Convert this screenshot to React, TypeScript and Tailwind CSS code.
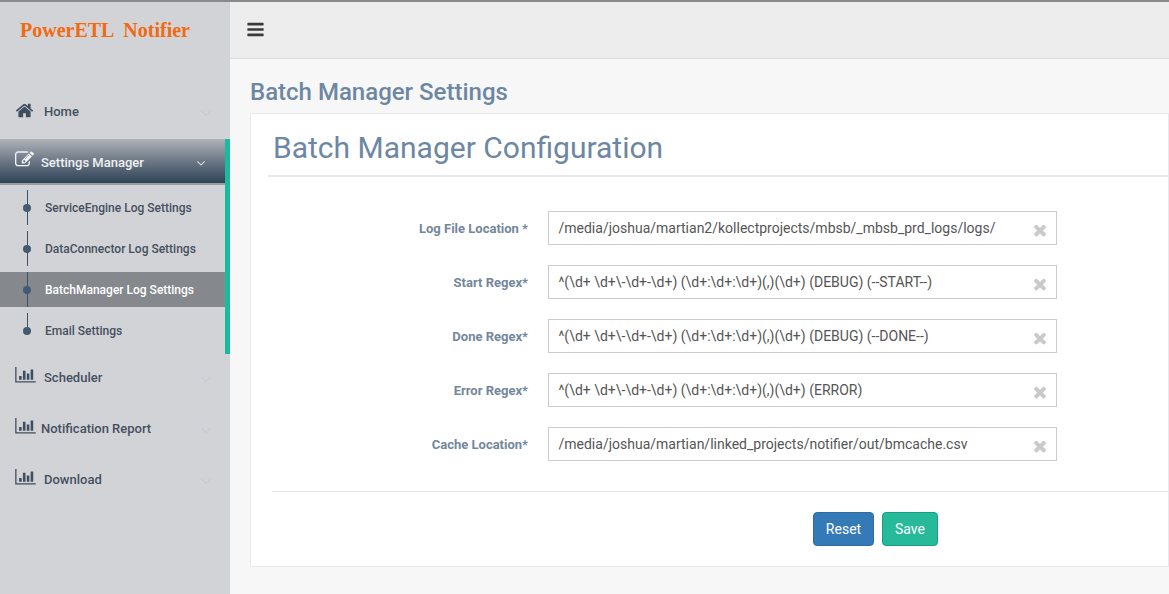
const FIELDS = [
  { label: "Log File Location *", value: "/media/joshua/martian2/kollectprojects/mbsb/_mbsb_prd_logs/logs/" },
  { label: "Start Regex*", value: "^(\\d+ \\d+\\-\\d+-\\d+) (\\d+:\\d+:\\d+)(,)(\\d+) (DEBUG) (--START--)" },
  { label: "Done Regex*", value: "^(\\d+ \\d+\\-\\d+-\\d+) (\\d+:\\d+:\\d+)(,)(\\d+) (DEBUG) (--DONE--)" },
  { label: "Error Regex*", value: "^(\\d+ \\d+\\-\\d+-\\d+) (\\d+:\\d+:\\d+)(,)(\\d+) (ERROR)" },
  { label: "Cache Location*", value: "/media/joshua/martian/linked_projects/notifier/out/bmcache.csv" },
];

const SUB_ITEMS = [
  { label: "ServiceEngine Log Settings" },
  { label: "DataConnector Log Settings" },
  { label: "BatchManager Log Settings", active: true },
  { label: "Email Settings", last: true },
];

/* font-awesome 4 glyphs, react-icons only ships the newer shapes */
function HomeIcon() {
  return (
    <svg viewBox="0 0 1792 1792" className="-mt-[3px] h-[19px] w-[19px] shrink-0 text-[#3f4e5e]" fill="currentColor" aria-hidden>
      <path d="M1472 992v480q0 26-19 45t-45 19h-384v-384h-256v384h-384q-26 0-45-19t-19-45v-480q0-1 .5-3t.5-3l575-474 575 474q1 2 1 6zm223-69l-62 74q-8 9-21 11h-3q-13 0-21-7l-692-577-692 577q-12 8-24 7-13-2-21-11l-62-74q-8-10-7-23.500t11-21.500l719-599q32-26 76-26t76 26l244 204v-195q0-14 9-23t23-9h192q14 0 23 9t9 23v408l219 182q10 8 11 21.500t-7 23.500z" />
    </svg>
  );
}

function EditIcon() {
  return (
    <svg viewBox="0 0 1792 1792" className="-mt-[4px] h-[19px] w-[19px] shrink-0 text-[#f1f3f5]" fill="currentColor" aria-hidden>
      <path d="M888 1184l116-116-152-152-116 116v56h96v96h56zm440-720q-16-16-33 1l-350 350q-17 17-1 33t33-1l350-350q17-17 1-33zm80 594v190q0 119-84.500 203.500t-203.500 84.500h-832q-119 0-203.500-84.500t-84.500-203.500v-832q0-119 84.500-203.500t203.500-84.500h832q63 0 117 25 15 7 18 23 3 17-9 29l-49 49q-14 14-32 8-23-6-45-6h-832q-66 0-113 47t-47 113v832q0 66 47 113t113 47h832q66 0 113-47t47-113v-126q0-13 9-22l64-64q15-15 35-7t20 29zm-96-738l288 288-672 672h-288v-288zm444 132l-92 92-288-288 92-92q28-28 68-28t68 28l152 152q28 28 28 68t-28 68z" />
    </svg>
  );
}

function BarChartIcon() {
  return (
    <svg viewBox="0 0 2048 1792" className="-mt-[4px] h-[18px] w-[21px] shrink-0 text-[#3f4e5e]" fill="currentColor" aria-hidden>
      <path d="M640 896v384h-256v-384h256zm384-512v896h-256v-896h256zm1024 1024v128h-2048v-1536h128v1408h1920zm-640-768v640h-256v-640h256zm384-384v1024h-256v-1024h256z" />
    </svg>
  );
}

function AngleDown({ className }: { className: string }) {
  return (
    <svg viewBox="0 0 1792 1792" className={className} fill="currentColor" aria-hidden>
      <path d="M1395 736q0 13-10 23l-466 466q-10 10-23 10t-23-10l-466-466q-10-10-10-23t10-23l50-50q10-10 23-10t23 10l393 393 393-393q10-10 23-10t23 10l50 50q10 10 10 23z" />
    </svg>
  );
}

function TimesIcon() {
  return (
    <svg viewBox="0 0 1792 1792" className="mt-[3px] h-[18px] w-[18px] shrink-0 text-[#c9c9c9]" fill="currentColor" aria-hidden>
      <path d="M1490 1322q0 40-28 68l-136 136q-28 28-68 28t-68-28l-294-294-294 294q-28 28-68 28t-68-28l-136-136q-28-28-28-68t28-68l294-294-294-294q-28-28-28-68t28-68l136-136q28-28 68-28t68 28l294 294 294-294q28-28 68-28t68 28l136 136q28 28 28 68t-28 68l-294 294 294 294q28 28 28 68z" />
    </svg>
  );
}

function BarsIcon() {
  return (
    <svg viewBox="0 0 1792 1792" className="-mt-[2px] h-[19px] w-[19px] text-[#3a3a3a]" fill="currentColor" aria-hidden>
      <path d="M1664 1344v128q0 26-19 45t-45 19h-1408q-26 0-45-19t-19-45v-128q0-26 19-45t45-19h1408q26 0 45 19t19 45zm0-512v128q0 26-19 45t-45 19h-1408q-26 0-45-19t-19-45v-128q0-26 19-45t45-19h1408q26 0 45 19t19 45zm0-512v128q0 26-19 45t-45 19h-1408q-26 0-45-19t-19-45v-128q0-26 19-45t45-19h1408q26 0 45 19t19 45z" />
    </svg>
  );
}

function NavRow({ label, icon, gap }: { label: string; icon: React.ReactNode; gap: string }) {
  return (
    <div className="flex h-[51px] items-center pl-[15px] pr-[15px] text-[13px] font-medium text-[#45505f]">
      <span className="flex w-[21px] shrink-0 justify-start">{icon}</span>
      <span className={`flex-1 ${gap}`}>{label}</span>
      <AngleDown className="mt-[2px] h-[18px] w-[18px] text-[#c3cdd7]" />
    </div>
  );
}

function Sidebar() {
  return (
    <aside className="flex w-[230px] shrink-0 flex-col bg-[#d2d3d7]">
      <div className="h-[58px] pl-[20px] pt-[16px] font-['Liberation_Serif',serif] text-[20px] leading-[24px] font-bold whitespace-pre text-[#f26a10]">
        PowerETL  Notifier
      </div>
      <div className="mt-[26px]">
        <NavRow label="Home" gap="ml-[8px]" icon={<HomeIcon />} />
      </div>
      <div className="mt-[2px] border-r-[5px] border-[#1abb9c]">
        <div className="flex h-[46px] items-center border-b-2 border-[#9a9da1] bg-gradient-to-b from-[#b0b3b9] via-[#6d7886] to-[#2f4357] pl-[15px] pr-[17px] text-[13px] font-medium text-[#eef0f2]">
          <EditIcon />
          <span className="ml-[7px] flex-1 pt-[3px]">Settings Manager</span>
          <AngleDown className="mt-[3px] h-[14px] w-[14px] text-[#d8dce0]" />
        </div>
        <ul className="flex h-[169px] flex-col gap-[6px] pt-[5px]">
          {SUB_ITEMS.map((item) => (
            <li
              key={item.label}
              className={`relative flex h-[35px] items-center pl-[45px] text-[12px] font-medium ${
                item.active ? "bg-[#85888d] text-white" : "text-[#45505f]"
              }`}
            >
              <span className={`absolute left-[27px] top-0 w-px bg-[#3d5166] ${item.last ? "h-[18px]" : "h-[35px]"}`} />
              <span className="absolute left-[23px] top-1/2 h-[8px] w-[8px] -translate-y-1/2 rounded-full bg-[#425a72]" />
              {item.label}
            </li>
          ))}
        </ul>
      </div>
      <div className="-mt-[2px]">
        <NavRow label="Scheduler" gap="ml-[8px]" icon={<BarChartIcon />} />
        <NavRow label="Notification Report" gap="ml-[5px]" icon={<BarChartIcon />} />
        <NavRow label="Download" gap="ml-[8px]" icon={<BarChartIcon />} />
      </div>
    </aside>
  );
}

function FormRow({ label, value }: { label: string; value: string }) {
  return (
    <div className="flex h-[34px] items-center">
      <label className="w-[280px] pr-[20px] pt-[2px] text-right text-[13px] font-bold text-[#73879c]">{label}</label>
      <div className="flex h-[34px] w-[509px] items-center justify-between border border-[#cccccc] pl-[9.500px] pr-[7px] text-[14px] text-[#555555]">
        <span className="whitespace-pre">{value}</span>
        <TimesIcon />
      </div>
    </div>
  );
}

export default function App() {
  return (
    <div className="flex h-[594px] w-[1169px] flex-col overflow-hidden border-t-2 border-[#8a8a8a] font-['Roboto',sans-serif]">
      <div className="flex min-h-0 flex-1">
        <Sidebar />
        <main className="flex min-w-0 flex-1 flex-col bg-[#f7f7f7]">
          <header className="flex h-[57px] shrink-0 items-center border-b border-[#d9dee4] bg-[#ededed] pl-[16px]">
            <BarsIcon />
          </header>
          <div className="pl-[20px]">
            <h1 className="mt-[19px] text-[24px] leading-[28px] font-medium text-[#6d87a3]">Batch Manager Settings</h1>
            <section className="mt-[7px] h-[454px] border border-[#e6e9ed] bg-white pl-[17px] pt-[16px]">
              <div className="border-b-2 border-[#e6e9ed] pb-[9px] pl-[5px] text-[30px] leading-[36px] text-[#6d87a3]">
                Batch Manager Configuration
              </div>
              <div className="flex flex-col gap-[20px] pt-[34px]">
                {FIELDS.map((f) => (
                  <FormRow key={f.label} label={f.label} value={f.value} />
                ))}
              </div>
              <div className="ml-[4px] mt-[30px] border-t border-[#e5e5e5] pl-[541px] pt-[20px]">
                <div className="flex gap-[8px]">
                  <button className="h-[34px] w-[61px] rounded-[4px] border border-[#2e6da4] bg-[#337ab7] text-[14px] text-white">
                    Reset
                  </button>
                  <button className="h-[34px] w-[56px] rounded-[4px] border border-[#169f85] bg-[#26b99a] text-[14px] text-white">
                    Save
                  </button>
                </div>
              </div>
            </section>
          </div>
        </main>
      </div>
    </div>
  );
}
